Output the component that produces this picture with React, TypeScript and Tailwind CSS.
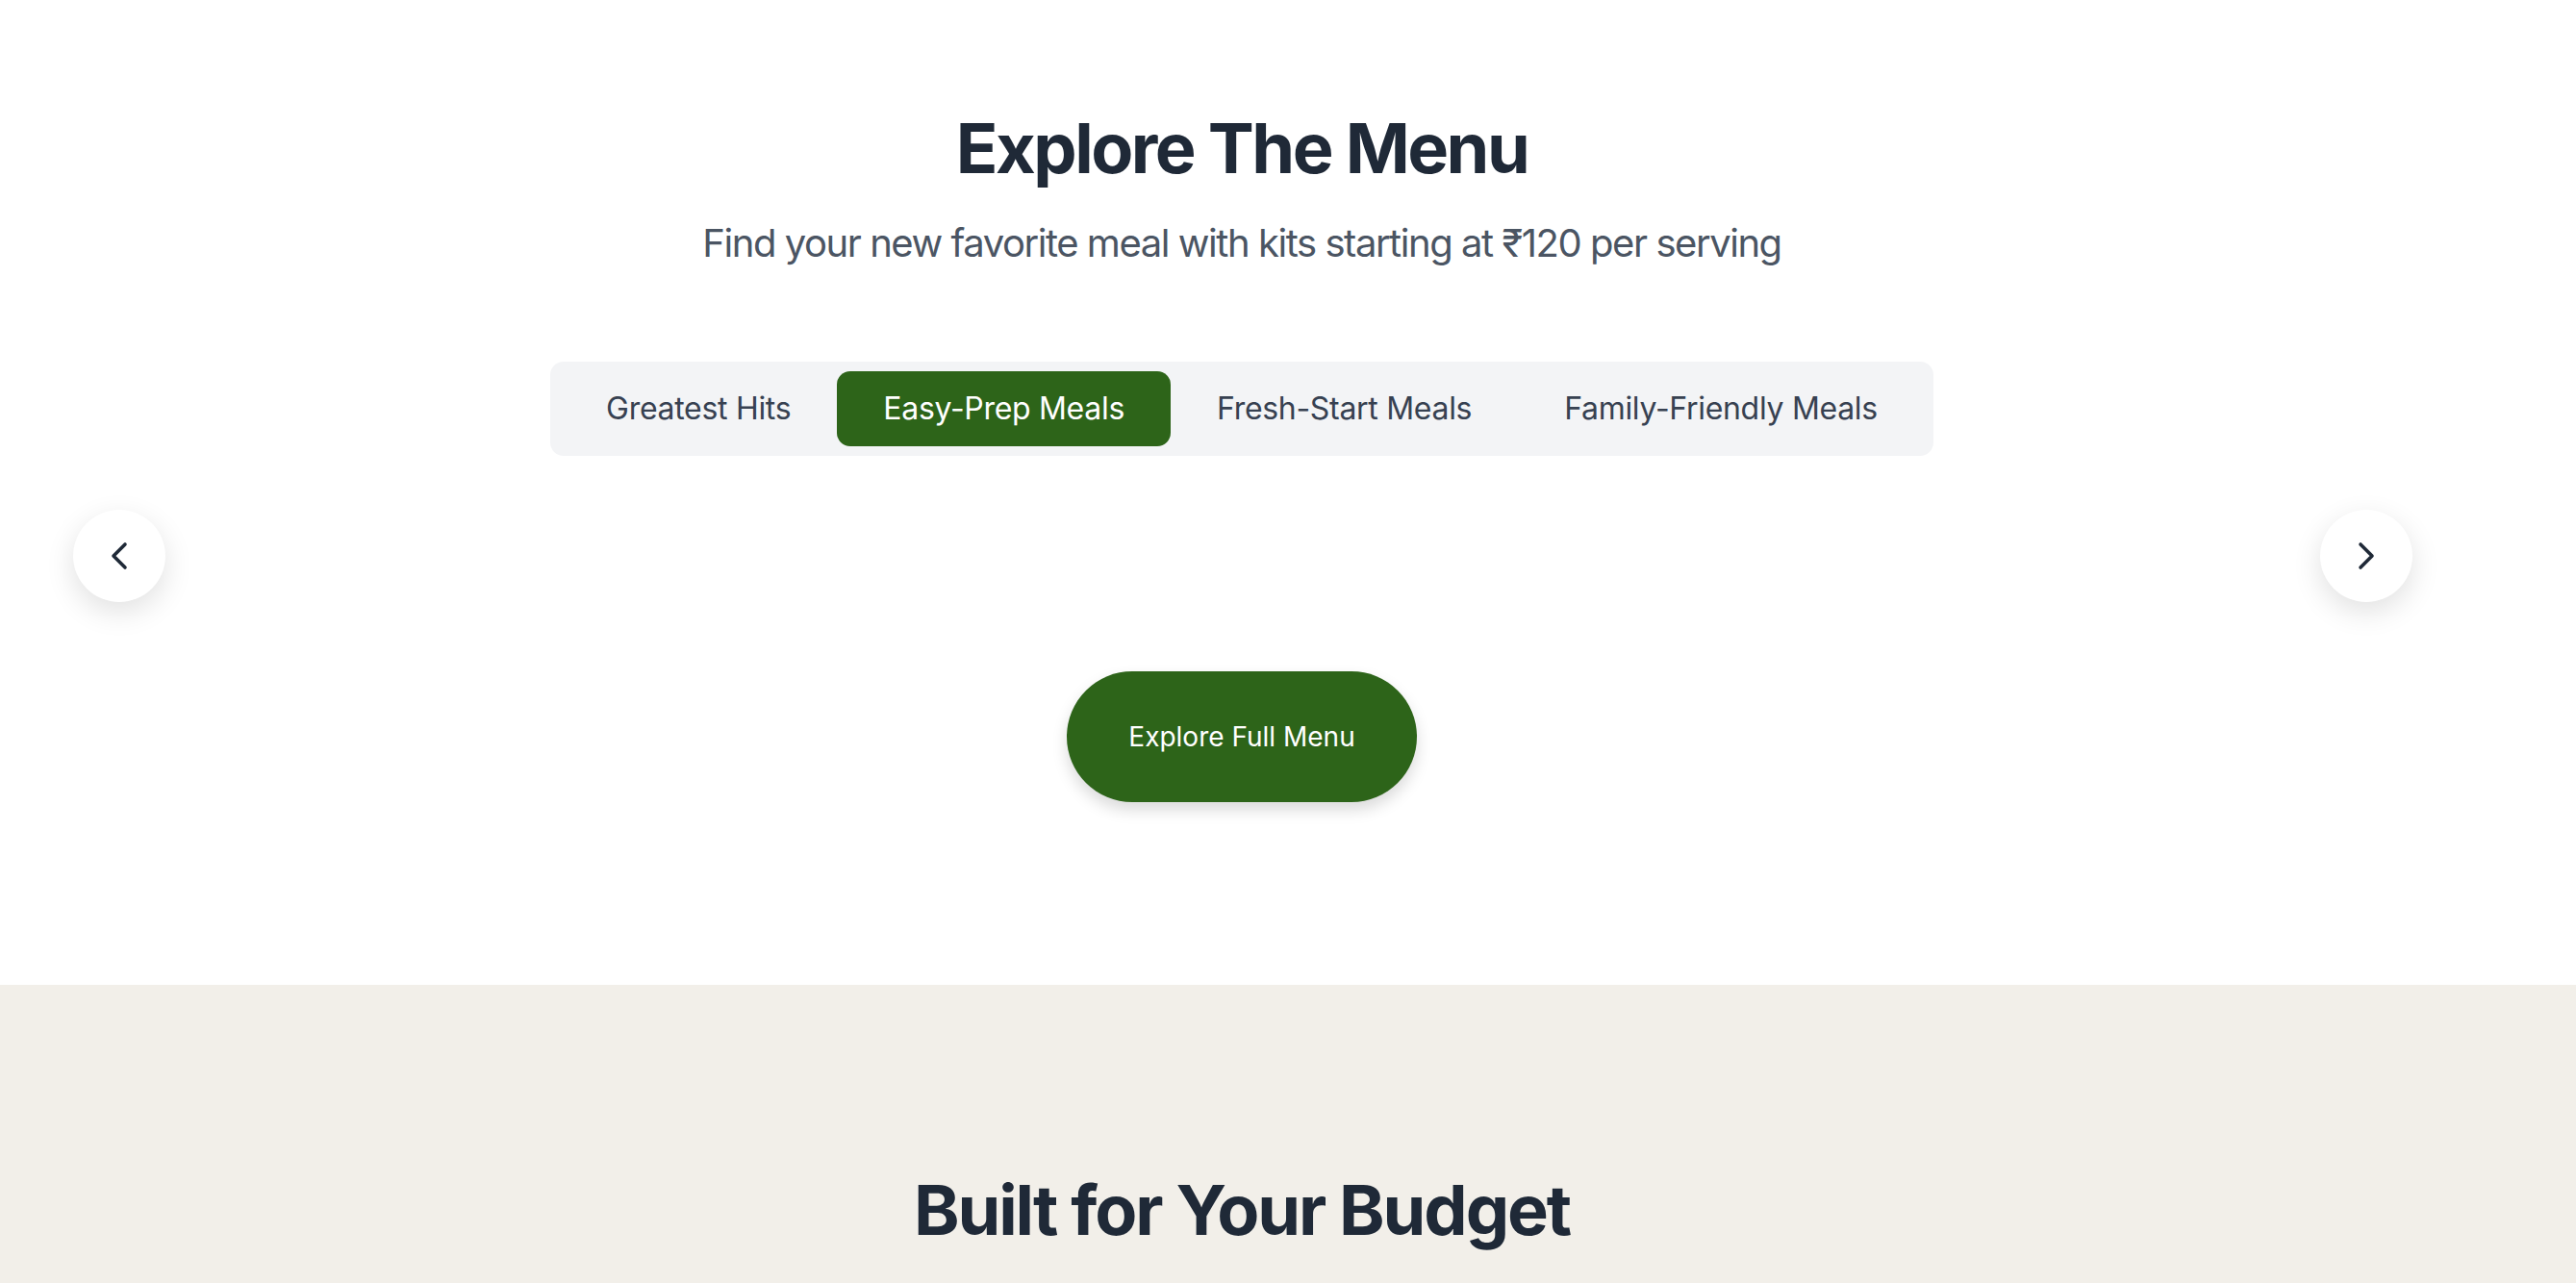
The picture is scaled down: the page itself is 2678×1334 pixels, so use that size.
import { useState } from 'react';
import { ChevronLeft, ChevronRight } from 'lucide-react';

const tabs = ['Greatest Hits', 'Easy-Prep Meals', 'Fresh-Start Meals', 'Family-Friendly Meals'];

export default function App() {
  const [active, setActive] = useState('Easy-Prep Meals');

  return (
    <div className="min-h-screen bg-white" style={{ fontFamily: 'Inter, "Noto Sans", sans-serif' }}>
      {/* Menu section */}
      <section className="pt-[114px] pb-[190px] pr-[96px] flex flex-col items-center">
        <h2 className="text-[72px] leading-[80px] font-bold text-[#1f2937] tracking-[-2.5px] mb-[31px]">
          Explore The Menu
        </h2>
        <p className="text-[40px] leading-[56px] text-[#4b5563] tracking-[-1.45px] mb-[95px]">
          Find your new favorite meal with kits starting at ₹120 per serving
        </p>

        {/* Category tabs */}
        <div className="flex bg-[#f3f4f6] rounded-[14px] p-[10px]">
          {tabs.map((t) => (
            <button
              key={t}
              onClick={() => setActive(t)}
              className={`px-[48px] h-[78px] rounded-[14px] text-[32px] leading-[48px] tracking-[-0.3px] ${
                active === t ? 'bg-[#2d6419] text-white' : 'text-[#374151]'
              }`}
            >
              {t}
            </button>
          ))}
        </div>

        {/* Carousel */}
        <div className="relative w-full h-[144px] mt-[32px]">
          <button className="absolute left-[76px] top-1/2 -translate-y-1/2 w-[96px] h-[96px] rounded-full bg-white flex items-center justify-center shadow-[0_10px_30px_rgba(0,0,0,0.12)]">
            <ChevronLeft size={48} strokeWidth={1.8} className="text-[#1f2937]" />
          </button>
          <button className="absolute right-[74px] top-1/2 -translate-y-1/2 w-[96px] h-[96px] rounded-full bg-white flex items-center justify-center shadow-[0_10px_30px_rgba(0,0,0,0.12)]">
            <ChevronRight size={48} strokeWidth={1.8} className="text-[#1f2937]" />
          </button>
        </div>

        <button className="mt-[48px] px-[64px] py-[48px] rounded-full bg-[#2d6419] text-white text-[28px] leading-[40px] shadow-[0_8px_16px_rgba(0,0,0,0.15)]">
          Explore Full Menu
        </button>
      </section>

      {/* Budget section */}
      <section className="bg-[#f2efe9] pt-[194px] pb-[120px] pr-[96px] flex flex-col items-center">
        <h2 className="text-[72px] leading-[80px] font-bold text-[#1f2937] tracking-[-2.1px]">
          Built for Your Budget
        </h2>
      </section>
    </div>
  );
}
